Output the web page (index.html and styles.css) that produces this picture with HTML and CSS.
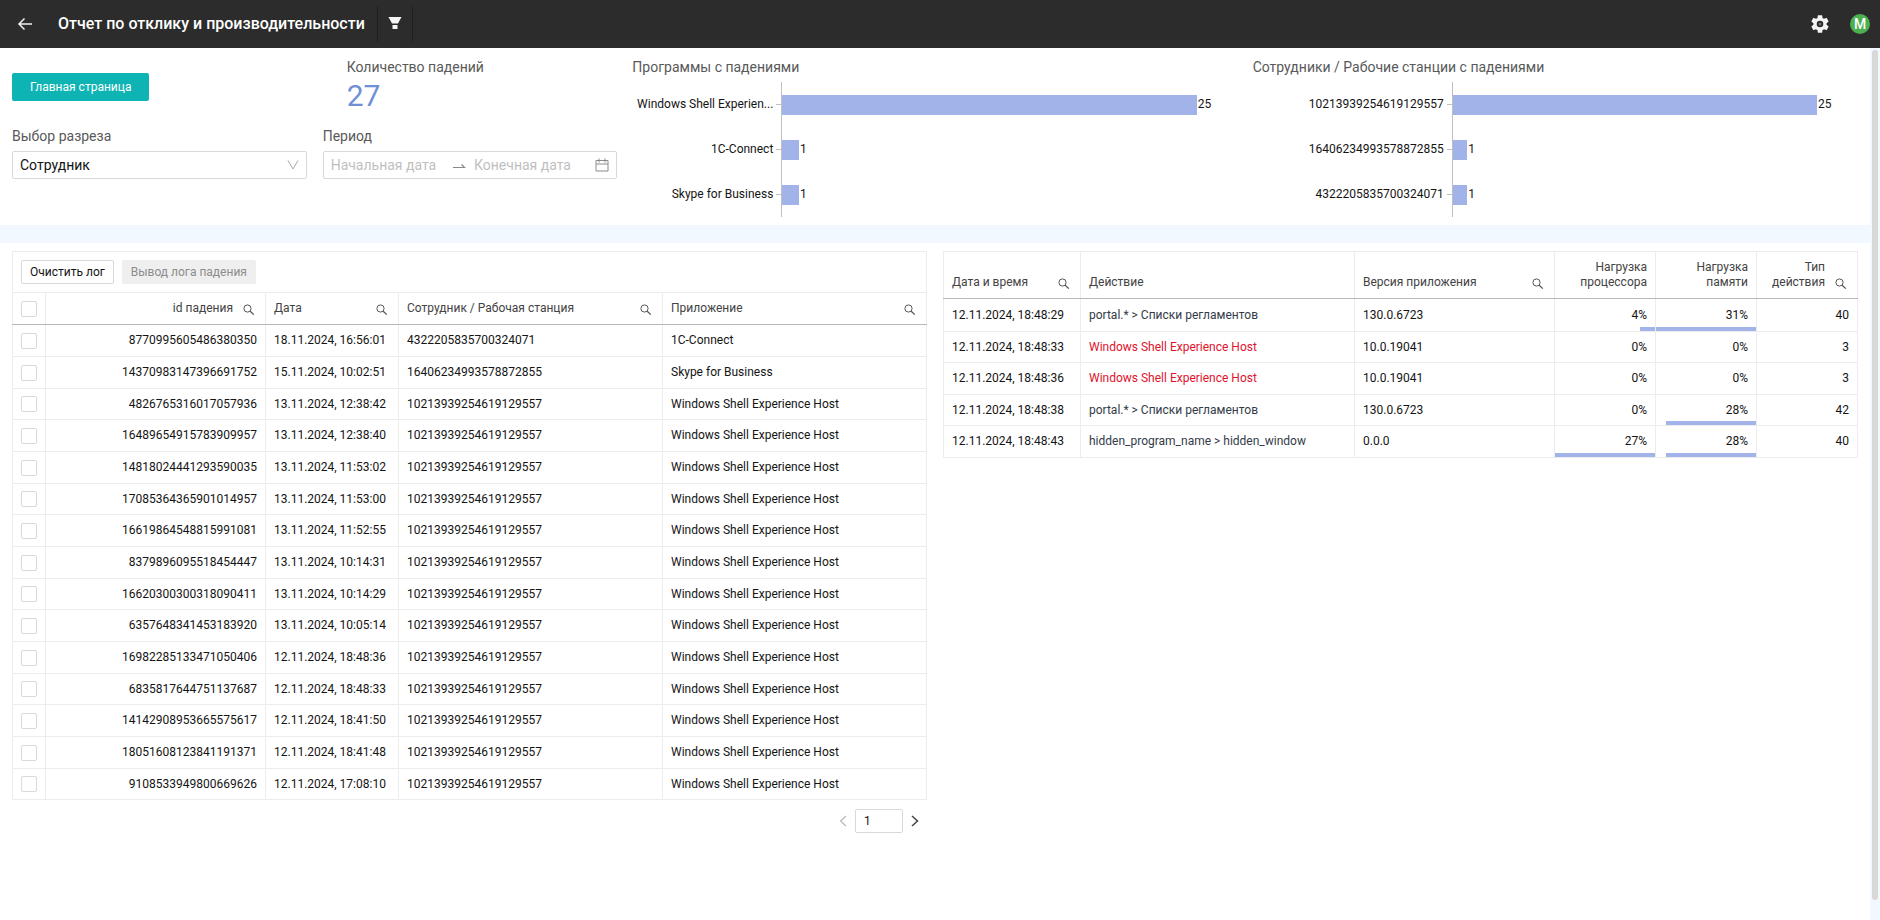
FILE: index.html
```html
<!DOCTYPE html>
<html lang="ru">
<head>
<meta charset="utf-8">
<title>Отчет по отклику и производительности</title>
<link rel="stylesheet" href="styles.css">
</head>
<body>
<svg class="sprite" aria-hidden="true">
  <symbol id="search" viewBox="0 0 12 12"><circle cx="4.5" cy="4.5" r="3.6" fill="none" stroke="currentColor"/><path d="M7.2 7.2L10.8 10.6" fill="none" stroke="currentColor" stroke-width="1.3"/></symbol>
</svg>
<header class="topbar">
  <button class="icon-btn back" aria-label="Назад"><svg width="16" height="16" viewBox="0 0 16 16"><path d="M7.5 2.5L2 8l5.500 5.500M2 8h13" fill="none" stroke="#f0f0f0" stroke-width="1.500"/></svg></button>
  <h1 class="title">Отчет по отклику и производительности</h1>
  <button class="icon-btn filter" aria-label="Фильтр"><svg width="14" height="14" viewBox="0 0 14 14"><path d="M.5 1h13L10 7.500H4zM4.500 9h5v4h-5z" fill="#f5f5f5"/></svg></button>
  <div class="spacer"></div>
  <button class="icon-btn gear" aria-label="Настройки"><svg width="22" height="22" viewBox="0 0 24 24"><path fill="#f5f5f5" d="M19.140 12.940c.04-.3.060-.61.060-.94s-.02-.64-.07-.94l2.030-1.580a.49.49 0 0 0 .12-.61l-1.920-3.320a.488.488 0 0 0-.59-.22l-2.390.96c-.5-.38-1.030-.7-1.620-.94l-.36-2.540a.484.484 0 0 0-.48-.41h-3.840c-.24 0-.43.17-.47.41l-.36 2.540c-.59.24-1.130.57-1.620.94l-2.390-.96a.49.49 0 0 0-.59.22L2.740 8.870c-.12.21-.08.47.12.61l2.030 1.580c-.05.3-.09.63-.09.94s.02.64.07.94l-2.030 1.580a.49.49 0 0 0-.12.61l1.920 3.320c.12.22.37.29.59.22l2.390-.96c.5.38 1.030.7 1.620.94l.36 2.540c.05.24.24.41.48.41h3.840c.24 0 .44-.17.47-.41l.36-2.540c.59-.24 1.130-.56 1.620-.94l2.390.96c.22.08.47 0 .59-.22l1.920-3.320a.49.49 0 0 0-.12-.61zM12 15.600A3.600 3.600 0 1 1 12 8.400a3.600 3.600 0 0 1 0 7.200z"/><circle cx="12" cy="12" r="1.500" fill="#777"/></svg></button>
  <span class="avatar">M</span>
</header>
<div class="page">
<main class="content">
  <section class="summary">
    <div class="controls">
      <button class="primary">Главная страница</button>
      <div class="metric"><h2 class="caption">Количество падений</h2><div class="metric-value">27</div></div>
      <div class="field">
        <label class="caption" for="slice">Выбор разреза</label>
        <div class="box select-box">
          <select id="slice"><option>Сотрудник</option></select>
          <svg width="12" height="12" viewBox="0 0 12 12"><path d="M1 1.500L6 10l5-8.500" fill="none" stroke="#a8a8a8"/></svg>
        </div>
      </div>
      <div class="field">
        <label class="caption" for="start">Период</label>
        <div class="box range-box">
          <input id="start" type="text" placeholder="Начальная дата">
          <svg width="14" height="14" viewBox="0 0 14 14"><path d="M1 9.500h11.500L9.500 6.500" fill="none" stroke="#888" stroke-width="1.200"/></svg>
          <input type="text" aria-label="Конечная дата" placeholder="Конечная дата">
          <svg class="calendar" width="14" height="14" viewBox="0 0 14 14"><path d="M1 2.500h12v10.500H1zM1 6h12M4 .5v4M10 .5v4" fill="none" stroke="#8c8c8c"/></svg>
        </div>
      </div>
    </div>
    <div class="chart chart-programs">
      <h2 class="caption">Программы с падениями</h2>
      <div class="bars">
        <div class="bar-label">Windows Shell Experien...</div><div class="track"><div class="bar" style="width:100%"></div><span>25</span></div>
        <div class="bar-label">1C-Connect</div><div class="track"><div class="bar" style="width:4%"></div><span>1</span></div>
        <div class="bar-label">Skype for Business</div><div class="track"><div class="bar" style="width:4%"></div><span>1</span></div>
      </div>
    </div>
    <div class="chart chart-staff">
      <h2 class="caption">Сотрудники / Рабочие станции с падениями</h2>
      <div class="bars">
        <div class="bar-label">10213939254619129557</div><div class="track"><div class="bar" style="width:100%"></div><span>25</span></div>
        <div class="bar-label">16406234993578872855</div><div class="track"><div class="bar" style="width:4%"></div><span>1</span></div>
        <div class="bar-label">4322205835700324071</div><div class="track"><div class="bar" style="width:4%"></div><span>1</span></div>
      </div>
    </div>
  </section>
  <section class="tables">
    <div>
      <div class="toolbar"><button class="tool">Очистить лог</button><button class="tool" disabled>Вывод лога падения</button></div>
      <table class="grid crashes">
        <colgroup><col class="c-check"><col class="c-id"><col class="c-date"><col><col></colgroup>
        <thead><tr>
          <th class="check"><input type="checkbox" aria-label="Выбрать все"></th>
          <th><div class="th num"><span>id падения</span><svg><use href="#search"/></svg></div></th>
          <th><div class="th"><span>Дата</span><svg><use href="#search"/></svg></div></th>
          <th><div class="th"><span>Сотрудник / Рабочая станция</span><svg><use href="#search"/></svg></div></th>
          <th><div class="th"><span>Приложение</span><svg><use href="#search"/></svg></div></th>
        </tr></thead>
        <tbody>
          <tr><td class="check"><input type="checkbox" aria-label="Выбрать строку"></td><td class="num">8770995605486380350</td><td>18.11.2024, 16:56:01</td><td>4322205835700324071</td><td>1C-Connect</td></tr>
          <tr><td class="check"><input type="checkbox" aria-label="Выбрать строку"></td><td class="num">14370983147396691752</td><td>15.11.2024, 10:02:51</td><td>16406234993578872855</td><td>Skype for Business</td></tr>
          <tr><td class="check"><input type="checkbox" aria-label="Выбрать строку"></td><td class="num">4826765316017057936</td><td>13.11.2024, 12:38:42</td><td>10213939254619129557</td><td>Windows Shell Experience Host</td></tr>
          <tr><td class="check"><input type="checkbox" aria-label="Выбрать строку"></td><td class="num">16489654915783909957</td><td>13.11.2024, 12:38:40</td><td>10213939254619129557</td><td>Windows Shell Experience Host</td></tr>
          <tr><td class="check"><input type="checkbox" aria-label="Выбрать строку"></td><td class="num">14818024441293590035</td><td>13.11.2024, 11:53:02</td><td>10213939254619129557</td><td>Windows Shell Experience Host</td></tr>
          <tr><td class="check"><input type="checkbox" aria-label="Выбрать строку"></td><td class="num">17085364365901014957</td><td>13.11.2024, 11:53:00</td><td>10213939254619129557</td><td>Windows Shell Experience Host</td></tr>
          <tr><td class="check"><input type="checkbox" aria-label="Выбрать строку"></td><td class="num">16619864548815991081</td><td>13.11.2024, 11:52:55</td><td>10213939254619129557</td><td>Windows Shell Experience Host</td></tr>
          <tr><td class="check"><input type="checkbox" aria-label="Выбрать строку"></td><td class="num">8379896095518454447</td><td>13.11.2024, 10:14:31</td><td>10213939254619129557</td><td>Windows Shell Experience Host</td></tr>
          <tr><td class="check"><input type="checkbox" aria-label="Выбрать строку"></td><td class="num">16620300300318090411</td><td>13.11.2024, 10:14:29</td><td>10213939254619129557</td><td>Windows Shell Experience Host</td></tr>
          <tr><td class="check"><input type="checkbox" aria-label="Выбрать строку"></td><td class="num">6357648341453183920</td><td>13.11.2024, 10:05:14</td><td>10213939254619129557</td><td>Windows Shell Experience Host</td></tr>
          <tr><td class="check"><input type="checkbox" aria-label="Выбрать строку"></td><td class="num">16982285133471050406</td><td>12.11.2024, 18:48:36</td><td>10213939254619129557</td><td>Windows Shell Experience Host</td></tr>
          <tr><td class="check"><input type="checkbox" aria-label="Выбрать строку"></td><td class="num">6835817644751137687</td><td>12.11.2024, 18:48:33</td><td>10213939254619129557</td><td>Windows Shell Experience Host</td></tr>
          <tr><td class="check"><input type="checkbox" aria-label="Выбрать строку"></td><td class="num">14142908953665575617</td><td>12.11.2024, 18:41:50</td><td>10213939254619129557</td><td>Windows Shell Experience Host</td></tr>
          <tr><td class="check"><input type="checkbox" aria-label="Выбрать строку"></td><td class="num">18051608123841191371</td><td>12.11.2024, 18:41:48</td><td>10213939254619129557</td><td>Windows Shell Experience Host</td></tr>
          <tr><td class="check"><input type="checkbox" aria-label="Выбрать строку"></td><td class="num">9108533949800669626</td><td>12.11.2024, 17:08:10</td><td>10213939254619129557</td><td>Windows Shell Experience Host</td></tr>
        </tbody>
      </table>
      <nav class="pager" aria-label="Страницы">
        <button aria-label="Предыдущая" disabled><svg width="8" height="12" viewBox="0 0 8 12"><path d="M7 1L1.500 6L7 11" fill="none" stroke="#b8b8b8" stroke-width="1.200"/></svg></button>
        <input type="text" value="1" aria-label="Номер страницы">
        <button aria-label="Следующая"><svg width="8" height="12" viewBox="0 0 8 12"><path d="M1 1l5.500 5L1 11" fill="none" stroke="#444" stroke-width="1.500"/></svg></button>
      </nav>
    </div>
    <table class="grid actions">
      <colgroup><col class="c-time"><col><col class="c-version"><col class="c-load"><col class="c-load"><col class="c-load"></colgroup>
      <thead><tr>
        <th><div class="th"><span>Дата и время</span><svg><use href="#search"/></svg></div></th>
        <th><div class="th"><span>Действие</span></div></th>
        <th><div class="th"><span>Версия приложения</span><svg><use href="#search"/></svg></div></th>
        <th class="num">Нагрузка процессора</th>
        <th class="num">Нагрузка памяти</th>
        <th><div class="th num"><span>Тип действия</span><svg><use href="#search"/></svg></div></th>
      </tr></thead>
      <tbody>
        <tr><td>12.11.2024, 18:48:29</td><td class="name">portal.* &gt; Списки регламентов</td><td>130.0.6723</td><td class="num load">4%<i style="width:15%"></i></td><td class="num load">31%<i style="width:100%"></i></td><td class="num">40</td></tr>
        <tr><td>12.11.2024, 18:48:33</td><td class="name crash">Windows Shell Experience Host</td><td>10.0.19041</td><td class="num">0%</td><td class="num">0%</td><td class="num">3</td></tr>
        <tr><td>12.11.2024, 18:48:36</td><td class="name crash">Windows Shell Experience Host</td><td>10.0.19041</td><td class="num">0%</td><td class="num">0%</td><td class="num">3</td></tr>
        <tr><td>12.11.2024, 18:48:38</td><td class="name">portal.* &gt; Списки регламентов</td><td>130.0.6723</td><td class="num">0%</td><td class="num load">28%<i style="width:90%"></i></td><td class="num">42</td></tr>
        <tr><td>12.11.2024, 18:48:43</td><td class="name">hidden_program_name &gt; hidden_window</td><td>0.0.0</td><td class="num load">27%<i style="width:100%"></i></td><td class="num load">28%<i style="width:90%"></i></td><td class="num">40</td></tr>
      </tbody>
    </table>
  </section>
</main>
<div class="scrollbar" aria-hidden="true"><div class="thumb"></div></div>
</div>
</body>
</html>
```
FILE: styles.css
```css
* { box-sizing: border-box; }
html, body { height: 100%; }
body {
  margin: 0;
  display: flex;
  flex-direction: column;
  font: 12px/19px Roboto, sans-serif;
  color: #141414;
  background: #fff;
}
button, input, select { font: inherit; color: inherit; margin: 0; }
button { cursor: pointer; }
.sprite { position: absolute; width: 0; height: 0; }

.topbar {
  flex: none;
  display: flex;
  align-items: center;
  height: 48px;
  padding: 0 10px 0 16px;
  background: #2c2c2c;
  color: #fff;
}
.icon-btn {
  display: flex;
  align-items: center;
  justify-content: center;
  padding: 0;
  border: 0;
  background: none;
}
.back { width: 18px; height: 32px; }
.title { margin: 0 12px 0 24px; font-size: 16px; font-weight: 500; line-height: 24px; }
.filter { width: 36px; height: 36px; padding-bottom: 2px; border: solid #1f1f1f; border-width: 0 1px; }
.spacer { flex: 1; }
.gear { width: 22px; height: 22px; margin-right: 19px; }
.avatar {
  width: 20px;
  height: 20px;
  border-radius: 50%;
  background: #4caf50;
  font-size: 14px;
  font-weight: 500;
  line-height: 20px;
  text-align: center;
}

.page { flex: 1; display: flex; min-height: 0; }
.content { flex: 1; min-width: 0; overflow-y: auto; scrollbar-width: none; }
.scrollbar { display: flex; width: 10px; padding: 2px 2px 20px; background: #f2f8ff; }
.thumb { flex: 1; border-radius: 3px; background: #d8d8d8; }

.summary {
  display: grid;
  grid-template-columns: repeat(3, 1fr);
  padding: 8px 9px 8px 0;
}
.caption { display: block; margin: 0; font-size: 14px; font-weight: 400; line-height: 22px; color: #595959; }
.controls {
  display: grid;
  grid-template-columns: repeat(2, minmax(0, 1fr));
  align-content: start;
  align-items: start;
  gap: 11px 16px;
  padding: 0 3px 0 12px;
}
.primary {
  justify-self: start;
  height: 28px;
  margin-top: 17px;
  padding: 0 18px;
  border: 0;
  border-radius: 2px;
  background: #0eb4b4;
  color: #fff;
}
.metric { padding-left: 24px; }
.metric-value { font-size: 30px; line-height: 36px; color: #6f8fd8; }
.box {
  display: flex;
  align-items: center;
  height: 28px;
  margin-top: 4px;
  padding: 0 7px;
  border: 1px solid #d9d9d9;
  border-radius: 2px;
  font-size: 14px;
}
.box select, .box input {
  flex: 1;
  min-width: 0;
  padding: 0;
  border: 0;
  outline: 0;
  background: none;
  appearance: none;
}
.box svg { flex: none; }
.box input::placeholder { color: #bfbfbf; }
.range-box { gap: 8px; }

.chart { padding-left: 12px; }
.bars { display: grid; grid-template-columns: 149px 1fr; margin-top: 4px; font-size: 12px; }
.chart-staff .bars { grid-template-columns: 199px 1fr; }
.bar-label {
  display: flex;
  align-items: center;
  justify-content: flex-end;
  height: 45px;
  white-space: nowrap;
}
.bar-label::after { content: ""; width: 5px; height: 1px; margin-left: 3px; background: #bfbfbf; }
.track { display: flex; align-items: center; margin-right: 44px; border-left: 1px solid #bfbfbf; }
.bar { flex: none; height: 20px; margin-right: 1px; background: #a2b3ea; }

.tables {
  display: grid;
  grid-template-columns: 1fr 1fr;
  align-items: start;
  gap: 16px;
  padding: 8px 12px;
  border-top: 18px solid #f2f8ff;
}
.toolbar {
  display: flex;
  gap: 8px;
  padding: 8px;
  border: 1px solid #ececec;
  border-bottom: 0;
}
.tool { height: 24px; padding: 0 8px; border: 1px solid #d9d9d9; border-radius: 2px; background: #fff; }
.tool:disabled { border-color: #efefef; background: #efefef; color: #8c8c8c; }
.grid { width: 100%; table-layout: fixed; border-collapse: collapse; }
.grid th, .grid td {
  height: 32px;
  padding: 0 8px;
  border: 1px solid #ececec;
  text-align: left;
  white-space: nowrap;
}
.grid th { font-weight: 400; color: #434343; border-bottom: 1px solid #b8b8b8; }
.crashes tr:nth-child(3n) td, .actions tr:nth-child(even) td { height: 31px; }
.actions tr:first-child td { height: 33px; }
.grid .num { text-align: right; }
.th { display: flex; align-items: flex-end; justify-content: space-between; }
.th.num { justify-content: flex-end; gap: 10px; }
.th svg { flex: none; width: 12px; height: 12px; margin: 0 2px 2px 0; color: #555; }
.grid .check { padding: 0; text-align: center; }
.check input {
  display: block;
  width: 16px;
  height: 16px;
  margin: 0 auto;
  border: 1px solid #d9d9d9;
  border-radius: 2px;
  appearance: none;
}
.c-check { width: 33px; }
.c-id { width: 220px; }
.c-date { width: 133px; }
.c-time { width: 137px; }
.c-version { width: 200px; }
.c-load { width: 101px; }
.actions th { height: 47px; padding: 8px; line-height: 15px; vertical-align: bottom; white-space: normal; }
.actions .th svg { margin-bottom: 0; }
.name { color: #333b48; }
.grid .crash { color: #e0122c; }
.load { position: relative; }
.load i { position: absolute; right: 0; bottom: 0; height: 4px; background: #a2b3ea; }

.pager { display: flex; align-items: center; justify-content: flex-end; gap: 8px; margin: 9px 8px 0 0; }
.pager button { display: flex; padding: 0; border: 0; background: none; }
.pager input { width: 48px; height: 24px; padding: 0 8px; border: 1px solid #d9d9d9; border-radius: 2px; }
```
